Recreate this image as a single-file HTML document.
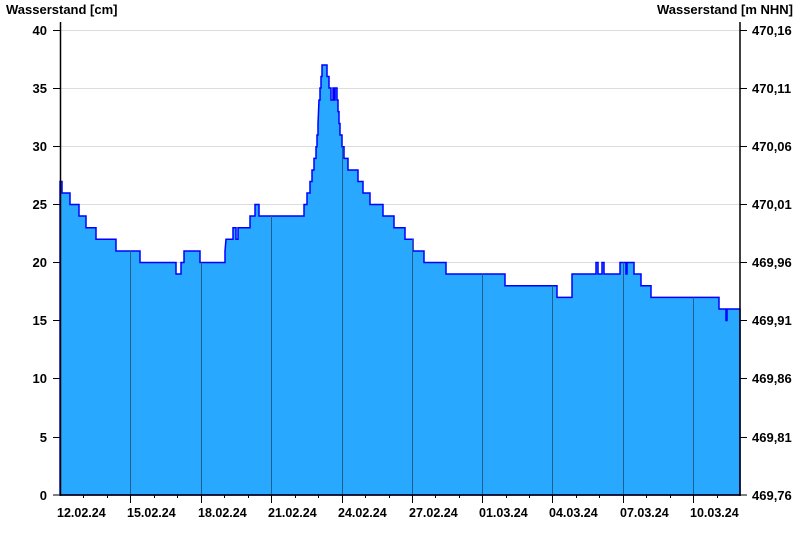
<!DOCTYPE html>
<html><head><meta charset="utf-8"><style>
html,body{margin:0;padding:0;background:#fff;}
svg{display:block;font-family:"Liberation Sans",Arial,sans-serif;font-weight:bold;font-size:13px;fill:#000}
</style></head><body>
<svg width="800" height="550" viewBox="0 0 800 550" xmlns="http://www.w3.org/2000/svg">
<text x="6" y="14">Wasserstand [cm]</text>
<text x="793" y="14" text-anchor="end">Wasserstand [m NHN]</text>
<g stroke="#dcdcdc" stroke-width="1">
<line x1="60" y1="30.5" x2="740" y2="30.5"/><line x1="60" y1="88.5" x2="740" y2="88.5"/>
<line x1="60" y1="146.5" x2="740" y2="146.5"/><line x1="60" y1="204.5" x2="740" y2="204.5"/>
<line x1="60" y1="262.5" x2="740" y2="262.5"/><line x1="60" y1="320.5" x2="740" y2="320.5"/>
<line x1="60" y1="378.5" x2="740" y2="378.5"/><line x1="60" y1="437.5" x2="740" y2="437.5"/>
</g>
<path id="d" fill="#29a8ff" stroke="#0000ff" stroke-width="1.5" d="M60,495 L60,181.5 H62 V193 H70 V204.5 H79 V216 H86 V227.7 H96 V239.3 H116 V251 H140 V262.5 H176 V274 H181 V262.5 H184 V251 H200 V262.5 H225 V251 L226,239.3 H233 V227.7 H236 V239.3 H238 V227.7 H250 V216 H255 V204.5 H259 V216 H304 V204.5 H307 V193 H310 V181.5 H312 V170 H314 V158.4 H316 V146.8 H317 V135 H318 V123.5 L319,100 H320 V88 H321 V76.5 H322 V65 H327 V76.5 H329 V88 H331 V100 H333 V88 H334 V100 H335 V88 H337 V100 H338 V111.6 H339 V123.5 H340 V135 H342 V146.8 H344 V158.4 H348 V170 H358 V181.5 H363 V193 H370 V204.5 H383 V216 H394 V227.7 H405 V239.3 H413 V251 H424 V262.5 H446 V274 H505 V285.8 H557 V297.4 H572 V274 H596 V262.5 H598 V274 H602 V262.5 H604 V274 H620 V262.5 H626 V274 H627 V262.5 H634 V274 H641 V285.8 H651 V297.4 H719 V309 H726 V320.5 H727 V309 H740 V495 Z"/>
<g stroke="#1f5f8f" stroke-width="1">
<line x1="130.5" y1="495" x2="130.5" y2="251"/>
<line x1="201.5" y1="495" x2="201.5" y2="262.5"/>
<line x1="271.5" y1="495" x2="271.5" y2="216"/>
<line x1="342.5" y1="495" x2="342.5" y2="146.8"/>
<line x1="412.5" y1="495" x2="412.5" y2="239.3"/>
<line x1="482.5" y1="495" x2="482.5" y2="274"/>
<line x1="552.5" y1="495" x2="552.5" y2="285.8"/>
<line x1="623.5" y1="495" x2="623.5" y2="262.5"/>
<line x1="693.5" y1="495" x2="693.5" y2="297.4"/>
</g>
<g stroke="#000" stroke-width="1.5">
<line x1="60.5" y1="22" x2="60.5" y2="496"/>
<line x1="740" y1="22" x2="740" y2="496"/>
<line x1="60" y1="495" x2="740" y2="495"/>
</g>
<g stroke="#000" stroke-width="1">
<line x1="53" y1="30.5" x2="60" y2="30.5"/><line x1="53" y1="88.5" x2="60" y2="88.5"/><line x1="53" y1="146.5" x2="60" y2="146.5"/><line x1="53" y1="204.5" x2="60" y2="204.5"/><line x1="53" y1="262.5" x2="60" y2="262.5"/><line x1="53" y1="320.5" x2="60" y2="320.5"/><line x1="53" y1="378.5" x2="60" y2="378.5"/><line x1="53" y1="437.5" x2="60" y2="437.5"/><line x1="53" y1="495" x2="60" y2="495"/>
<line x1="740" y1="30.5" x2="747" y2="30.5"/><line x1="740" y1="88.5" x2="747" y2="88.5"/><line x1="740" y1="146.5" x2="747" y2="146.5"/><line x1="740" y1="204.5" x2="747" y2="204.5"/><line x1="740" y1="262.5" x2="747" y2="262.5"/><line x1="740" y1="320.5" x2="747" y2="320.5"/><line x1="740" y1="378.5" x2="747" y2="378.5"/><line x1="740" y1="437.5" x2="747" y2="437.5"/><line x1="740" y1="495" x2="747" y2="495"/>
<path d="M83.5,495v3M107.5,495v3M130.5,495v8M154.5,495v3M177.5,495v3M201.5,495v8M224.5,495v3M248.5,495v3M271.5,495v8M295.5,495v3M318.5,495v3M342.5,495v8M365.5,495v3M389.5,495v3M412.5,495v8M435.5,495v3M459.5,495v3M482.5,495v8M506.5,495v3M529.5,495v3M552.5,495v8M576.5,495v3M599.5,495v3M623.5,495v8M646.5,495v3M670.5,495v3M693.5,495v8M717.5,495v3"/>
</g>
<g text-anchor="end">
<text x="47" y="35">40</text><text x="47" y="93">35</text><text x="47" y="151">30</text><text x="47" y="209">25</text><text x="47" y="267">20</text><text x="47" y="325">15</text><text x="47" y="383">10</text><text x="47" y="442">5</text><text x="47" y="500">0</text>
</g>
<g>
<text x="752" y="35">470,16</text><text x="752" y="93">470,11</text><text x="752" y="151">470,06</text><text x="752" y="209">470,01</text><text x="752" y="267">469,96</text><text x="752" y="325">469,91</text><text x="752" y="383">469,86</text><text x="752" y="442">469,81</text><text x="752" y="500">469,76</text>
</g>
<g font-size="12.5">
<text x="57" y="517">12.02.24</text><text x="127" y="517">15.02.24</text><text x="198" y="517">18.02.24</text><text x="268" y="517">21.02.24</text><text x="338" y="517">24.02.24</text><text x="409" y="517">27.02.24</text><text x="479" y="517">01.03.24</text><text x="549" y="517">04.03.24</text><text x="620" y="517">07.03.24</text><text x="690" y="517">10.03.24</text>
</g>
</svg>
</body></html>
